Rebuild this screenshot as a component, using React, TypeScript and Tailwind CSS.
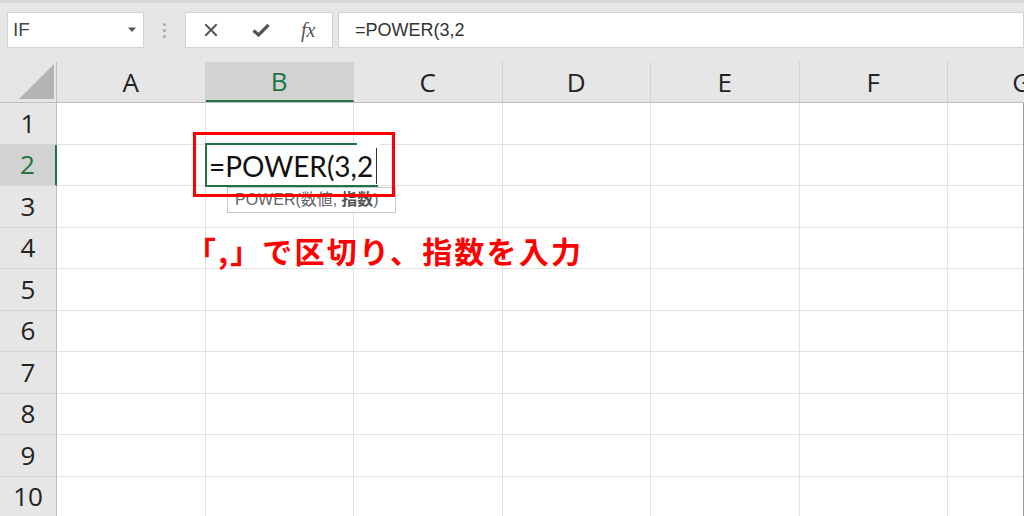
import React from 'react';

const cols = ['A', 'B', 'C', 'D', 'E', 'F', 'G'];
const rows = [1, 2, 3, 4, 5, 6, 7, 8, 9, 10];

function FormulaBar() {
  return (
    <div className="h-[62px] bg-[#e6e6e6] border-t-[3px] border-[#d6d6d6] pt-[9px] flex items-start">
      {/* Name box */}
      <div className="ml-[7px] w-[137px] h-[36px] bg-white border border-[#d2d2d2] flex items-center justify-between pl-[5px] pr-[6px]">
        <span className="text-[19px] text-[#444] font-['Liberation_Sans',sans-serif]">IF</span>
        <svg width="10" height="6" viewBox="0 0 10 6">
          <path d="M1 0.5 H9 L5 5 Z" fill="#555" />
        </svg>
      </div>
      {/* Dots */}
      <div className="w-[41px] h-[36px] flex flex-col items-center justify-center gap-[3px]">
        <span className="w-[3px] h-[3px] rounded-full bg-[#a8a8a8]" />
        <span className="w-[3px] h-[3px] rounded-full bg-[#a8a8a8]" />
        <span className="w-[3px] h-[3px] rounded-full bg-[#a8a8a8]" />
      </div>
      {/* Cancel / Enter / fx */}
      <div className="w-[148px] h-[36px] bg-white border border-[#d2d2d2] flex items-center">
        <svg className="ml-[18px]" width="14" height="14" viewBox="0 0 14 14">
          <path d="M2 2 L12 12 M12 2 L2 12" stroke="#555" strokeWidth="2" strokeLinecap="square" />
        </svg>
        <svg className="ml-[34px]" width="18" height="14" viewBox="0 0 18 14">
          <path d="M1.5 7.5 L6.5 12 L16.5 2" stroke="#555" strokeWidth="3.2" fill="none" />
        </svg>
        <span className="ml-[31px] italic text-[20px] text-[#555] font-['Liberation_Serif',serif] leading-none">fx</span>
      </div>
      {/* Formula input */}
      <div className="ml-[5px] flex-1 h-[36px] bg-white border border-[#d2d2d2] flex items-center pl-[16px]">
        <span className="text-[18px] text-[#333] font-['Liberation_Sans',sans-serif]">=POWER(3,2</span>
      </div>
    </div>
  );
}

function Grid() {
  return (
    <div className="font-['Open_Sans',sans-serif]">
      {/* Column headers */}
      <div className="flex h-[41px] bg-[#e6e6e6] border-b border-[#bdbdbd]">
        <div className="w-[57px] shrink-0 border-r border-[#bdbdbd] flex items-end justify-end pr-[2px] pb-[3px]">
          <svg width="35" height="35" viewBox="0 0 35 35">
            <path d="M35 0 V35 H0 Z" fill="#b4b4b4" />
          </svg>
        </div>
        {cols.map((c) => (
          <div
            key={c}
            className={`w-[148.5px] shrink-0 border-r border-[#d0d0d0] flex items-center justify-center text-[26px] ${
              c === 'B' ? 'bg-[#d2d2d2] text-[#217346] border-b-2 border-b-[#217346]' : 'text-[#222]'
            }`}
          >
            {c}
          </div>
        ))}
      </div>
      {rows.map((r) => (
        <div key={r} className="flex h-[41.5px]">
          <div
            className={`w-[57px] shrink-0 border-b border-[#d4d4d4] flex items-center justify-center text-[26px] ${
              r === 2
                ? 'bg-[#d2d2d2] text-[#217346] border-r-2 border-r-[#217346]'
                : 'bg-[#e6e6e6] text-[#222] border-r border-r-[#bdbdbd]'
            }`}
          >
            {r}
          </div>
          {cols.map((c) => (
            <div key={c} className="w-[148.5px] shrink-0 border-r border-b border-[#e1e1e1] bg-white" />
          ))}
        </div>
      ))}
    </div>
  );
}

export default function App() {
  return (
    <div className="relative w-[1024px] h-[516px] overflow-hidden bg-white">
      <FormulaBar />
      <Grid />

      {/* Active cell in edit mode */}
      <div className="absolute left-[205px] top-[143px] w-[173px] h-[44px] bg-white border-l-2 border-t-2 border-b-2 border-[#217346]">
        <div className="absolute left-[150px] -top-[2px] w-[23px] h-[2px] bg-white" />
        <span className="absolute left-[2px] top-[3px] text-[28px] leading-[36px] text-[#111] font-['Lato',sans-serif]">
          =POWER(3,2
        </span>
        <span className="absolute left-[169px] top-[3px] w-px h-[36px] bg-[#333]" />
      </div>

      {/* Argument tooltip */}
      <div className="absolute left-[227px] top-[187px] w-[169px] h-[26px] bg-white border border-[#c8c8c8] flex items-center pl-[7px] text-[16px] text-[#666] font-['Liberation_Sans','Noto_Sans_CJK_JP',sans-serif] whitespace-nowrap">
        POWER(数値, <b className="font-bold text-[#555] ml-[4px]">指数</b>)
      </div>

      {/* Red highlight */}
      <div className="absolute left-[193px] top-[132px] w-[202px] h-[65px] border-[3px] border-[#ff0000]" />

      {/* Annotation */}
      <div className="absolute left-[186px] top-[230px] text-[30px] leading-[40px] font-bold tracking-[2.2px] text-[#ff0000] font-['Noto_Sans_CJK_JP',sans-serif] whitespace-nowrap">
        「,」で区切り、指数を入力
      </div>

      {/* Right edge line */}
      <div className="absolute right-0 top-[103px] w-px h-[413px] bg-[#9a9a9a]" />
    </div>
  );
}
